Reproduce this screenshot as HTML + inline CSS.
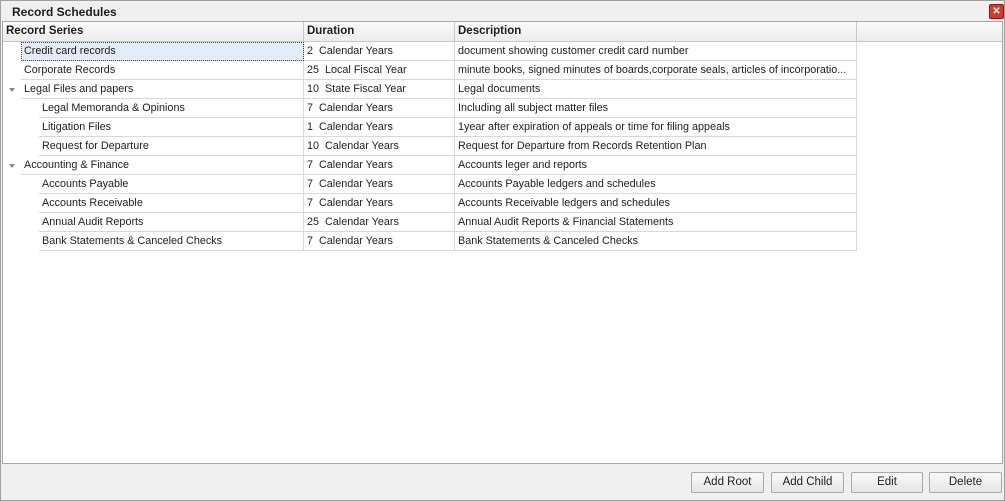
<!DOCTYPE html><html><head><style>
body{margin:0;width:1005px;height:501px;background:#f0f0f0;font-family:"Liberation Sans",sans-serif;font-size:10.8px;color:#1e1e1e;position:relative;overflow:hidden}
.win{position:absolute;left:0;top:0;width:1003px;height:499px;border:1px solid #a0a0a0;background:#f0f0f0}
.title{position:absolute;left:11px;top:4px;font-weight:bold;font-size:12px;color:#1e1e1e}
.x{position:absolute;left:988px;top:3px;width:13px;height:13px;background:#d23b2b;border:1px solid #8a1a10;border-radius:2px;color:#fff;font-size:10px;font-weight:bold;line-height:13px;text-align:center}
.grid{position:absolute;left:1px;top:20px;width:999px;height:441px;background:#fff;border:1px solid #a8a8a8}
.c{position:absolute;height:18px;line-height:18px;border-right:1px solid #d8d8d8;border-bottom:1px solid #d8d8d8;padding-left:3px;box-sizing:content-box;white-space:pre;overflow:hidden}
.h{position:absolute;top:0;height:19px;line-height:19px;font-weight:bold;font-size:11.5px;background:linear-gradient(#fafafa,#ececec);border-right:1px solid #c8c8c8;border-bottom:1px solid #c8c8c8;padding-left:3px}
.btn{position:absolute;top:471px;height:19px;line-height:19px;border:1px solid #a8a8a8;border-radius:2px;background:linear-gradient(#f8f8f8,#e6e6e6);text-align:center;font-size:11.5px}
.arr{position:absolute;left:6px;width:0;height:0;border-left:3px solid transparent;border-right:3px solid transparent;border-top:4px solid #888}
</style></head><body><div class="win">
<div class="title">Record Schedules</div><div class="x">✕</div>
<div class="grid">
<div class="h" style="left:0;width:297px">Record Series</div>
<div class="h" style="left:301px;width:147px">Duration</div>
<div class="h" style="left:452px;width:398px">Description</div>
<div class="h" style="left:854px;width:142px;border-right:none"></div>
<div id="rows"></div>
</div>
<div class="btn" style="left:690px;width:71px">Add Root</div>
<div class="btn" style="left:770px;width:71px">Add Child</div>
<div class="btn" style="left:850px;width:70px">Edit</div>
<div class="btn" style="left:928px;width:71px">Delete</div>
</div>
<script>
var d=[[0,"Credit card records","2  Calendar Years","document showing customer credit card number"],
[0,"Corporate Records","25  Local Fiscal Year","minute books, signed minutes of boards,corporate seals, articles of incorporatio..."],
[2,"Legal Files and papers","10  State Fiscal Year","Legal documents"],
[1,"Legal Memoranda & Opinions","7  Calendar Years","Including all subject matter files"],
[1,"Litigation Files","1  Calendar Years","1year after expiration of appeals or time for filing appeals"],
[1,"Request for Departure","10  Calendar Years","Request for Departure from Records Retention Plan"],
[2,"Accounting & Finance","7  Calendar Years","Accounts leger and reports"],
[1,"Accounts Payable","7  Calendar Years","Accounts Payable ledgers and schedules"],
[1,"Accounts Receivable","7  Calendar Years","Accounts Receivable ledgers and schedules"],
[1,"Annual Audit Reports","25  Calendar Years","Annual Audit Reports & Financial Statements"],
[1,"Bank Statements & Canceled Checks","7  Calendar Years","Bank Statements & Canceled Checks"]];
var h="";d.forEach(function(r,i){var t=20+i*19;var l=r[0]==1?36:18;
if(r[0]==2)h+='<div class="arr" style="top:'+(t+8)+'px"></div>';
h+='<div class="c" style="top:'+t+'px;left:'+l+'px;width:'+(279-l+18)+'px'+(i==0?';background:#e4ecf7;outline:1px dotted #444;outline-offset:-1px':'')+'">'+r[1].replace(/&/g,'&amp;')+'</div>';
h+='<div class="c" style="top:'+t+'px;left:301px;width:147px">'+r[2]+'</div>';
h+='<div class="c" style="top:'+t+'px;left:452px;width:398px">'+r[3].replace(/&/g,'&amp;')+'</div>';});
document.getElementById("rows").innerHTML=h;
</script></body></html>
